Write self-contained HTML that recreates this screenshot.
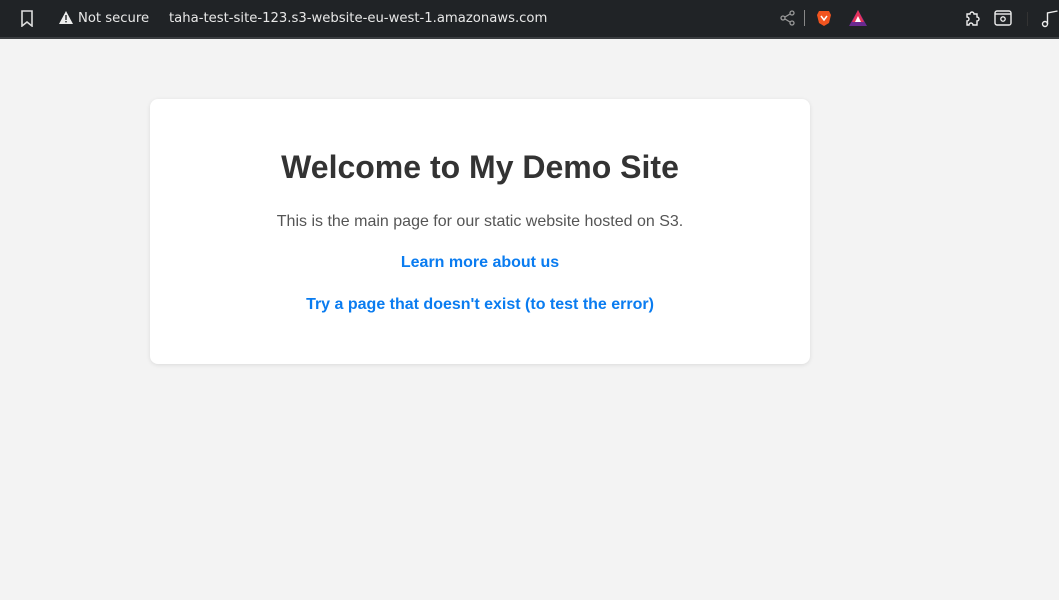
<!DOCTYPE html>
<html><head><style>
html,body{margin:0;padding:0;width:1059px;height:600px;overflow:hidden;background:#f3f3f3;font-family:"Liberation Sans",Arial,sans-serif}
.bar{position:absolute;left:0;top:0;width:1059px;height:37px;background:#202326;border-bottom:2px solid #3a3d40;color:#e8e8e8;font-family:"DejaVu Sans","Liberation Sans",sans-serif;font-size:13.2px}
.bar span{position:absolute;top:12px;line-height:13px}
.card{position:absolute;left:150px;top:99px;width:660px;height:265px;background:#fff;border-radius:8px;box-shadow:0 1px 4px rgba(0,0,0,.1);text-align:center}
h1{margin:0;position:absolute;top:50px;width:100%;font-size:32px;color:#333;font-weight:bold}
p{margin:0;position:absolute;top:114px;width:100%;font-size:16px;color:#555}
a{position:absolute;width:100%;left:0;font-size:16px;font-weight:bold;color:#0a7cf0;text-decoration:none}
</style></head><body>
<div class="bar">
<svg style="position:absolute;left:20px;top:10px" width="14" height="17" viewBox="0 0 14 17"><path d="M2 1h10v15l-5-4-5 4z" fill="none" stroke="#ddd" stroke-width="1.6"/></svg>
<svg style="position:absolute;left:59px;top:11px" width="14" height="13" viewBox="0 0 14 13"><path d="M7 0L14 13H0z" fill="#eee"/><rect x="6.3" y="4" width="1.4" height="5" fill="#202326"/><rect x="6.3" y="10" width="1.4" height="1.4" fill="#202326"/></svg>
<span style="left:78px">Not secure</span>
<span style="left:169px">taha-test-site-123.s3-website-eu-west-1.amazonaws.com</span>
<svg style="position:absolute;left:780px;top:10px" width="16" height="16" viewBox="0 0 16 16"><g fill="none" stroke="#999" stroke-width="1.3"><circle cx="3" cy="8" r="2"/><circle cx="12" cy="3" r="2"/><circle cx="12" cy="13" r="2"/><path d="M5 7l5-3M5 9l5 3"/></g></svg>
<div style="position:absolute;left:804px;top:10px;width:1px;height:16px;background:#888"></div>
<svg style="position:absolute;left:815px;top:9px" width="18" height="18" viewBox="0 0 18 18"><path d="M4 2h10l2 4-2 8-5 3-5-3-2-8z" fill="#f1541f"/><path d="M6 7l3 4 3-4" fill="none" stroke="#fff" stroke-width="1.5"/></svg>
<svg style="position:absolute;left:849px;top:10px" width="18" height="16" viewBox="0 0 18 16"><path d="M9 0l9 16H0z" fill="#6a2a90"/><path d="M9 0l6 12H3z" fill="#e6335a"/><path d="M9 6l3 6H6z" fill="#fff"/></svg>
<svg style="position:absolute;left:964px;top:9px" width="18" height="18" viewBox="0 0 18 18"><path d="M3 5h3a2 2 0 1 1 4 0h3v3a2 2 0 1 1 0 4v4H9a2 2 0 1 0-4 0H3v-4a2 2 0 1 0 0-4z" fill="none" stroke="#eee" stroke-width="1.4"/></svg>
<svg style="position:absolute;left:994px;top:10px" width="18" height="16" viewBox="0 0 18 16"><rect x="1" y="1" width="16" height="14" rx="2" fill="none" stroke="#eee" stroke-width="1.4"/><path d="M1 4h16" stroke="#eee" stroke-width="1.4"/><circle cx="9" cy="9" r="2.2" fill="none" stroke="#eee" stroke-width="1.3"/></svg>
<div style="position:absolute;left:1027px;top:12px;width:1px;height:14px;background:#333"></div>
<svg style="position:absolute;left:1041px;top:10px" width="18" height="18" viewBox="0 0 18 18"><g fill="none" stroke="#eee" stroke-width="1.4"><circle cx="4" cy="14" r="2.5"/><path d="M6.5 14V3l10-2"/></g></svg>
</div>
<div class="card">
<h1>Welcome to My Demo Site</h1>
<p>This is the main page for our static website hosted on S3.</p>
<a style="top:155px">Learn more about us</a>
<a style="top:197px">Try a page that doesn't exist (to test the error)</a>
</div>
</body></html>
